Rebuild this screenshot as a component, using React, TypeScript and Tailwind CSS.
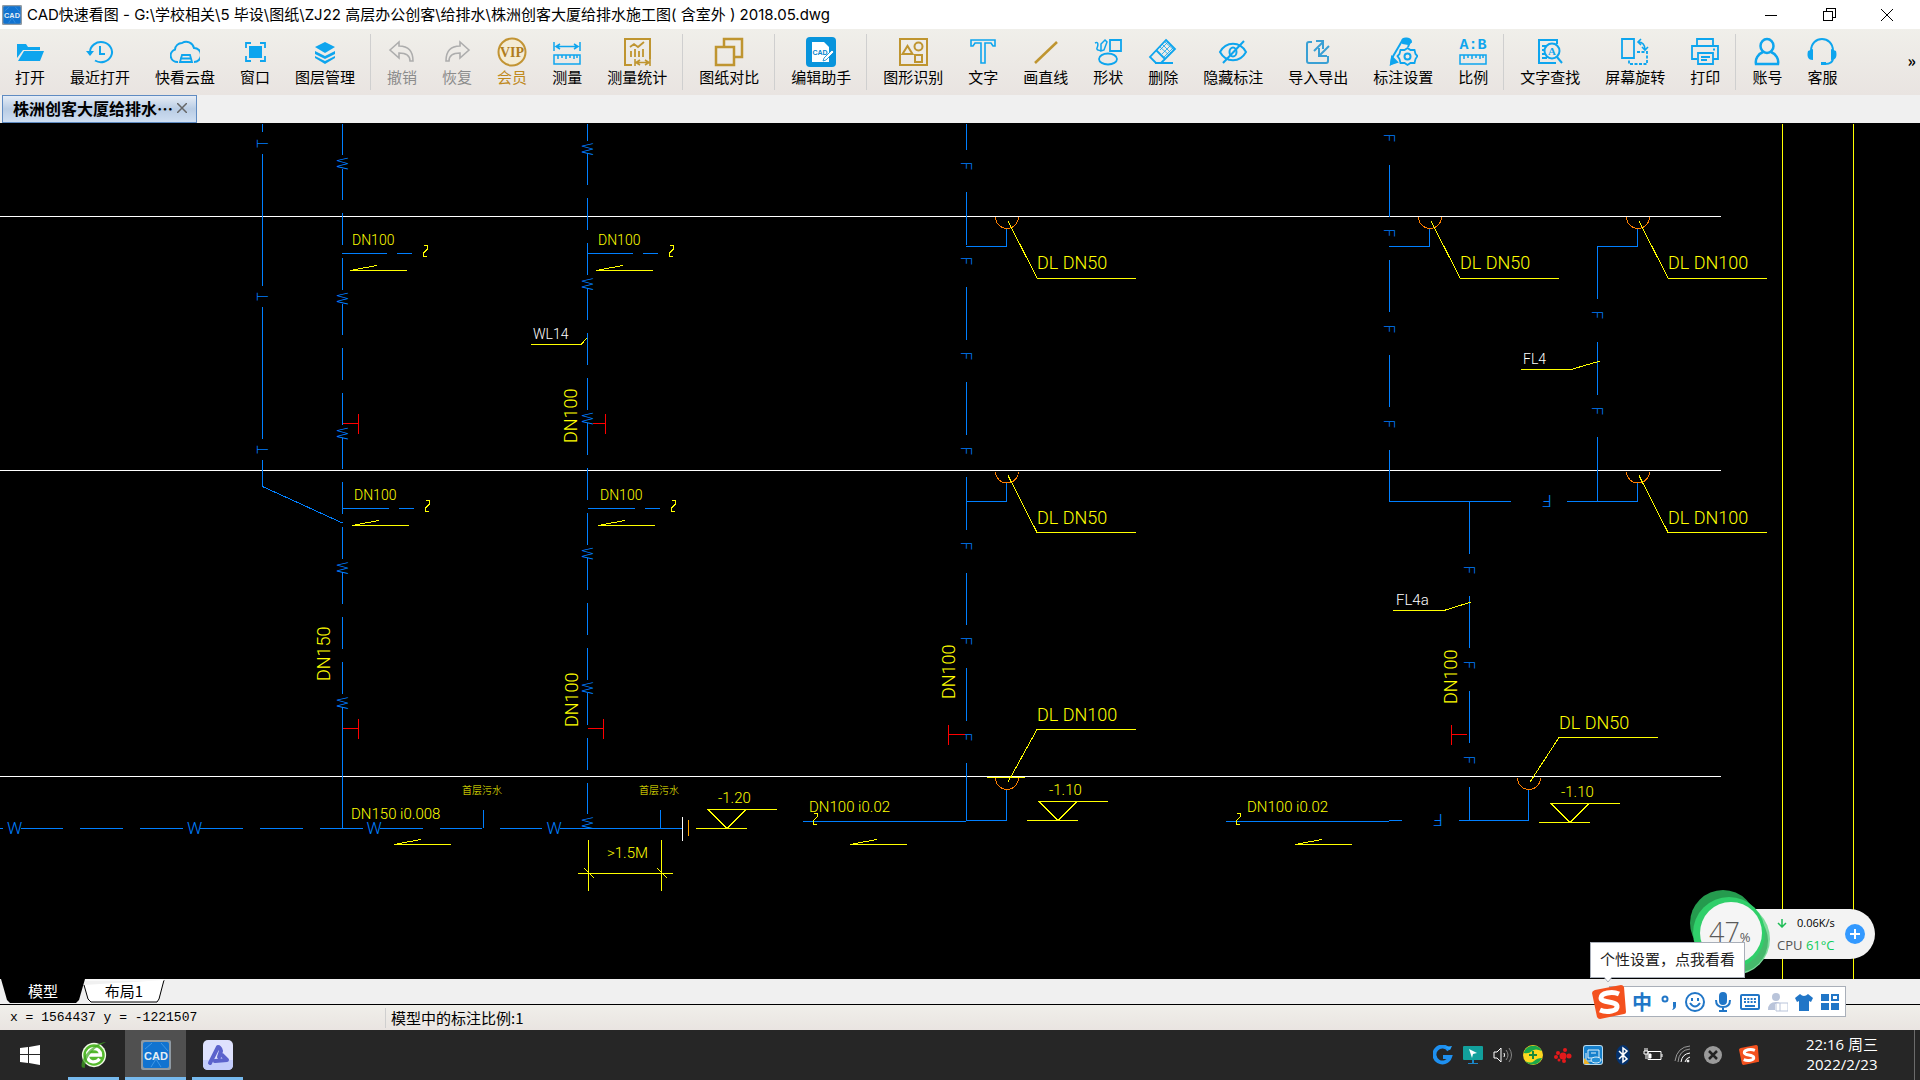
import type { ReactNode } from "react"

const SKY = "#0ea5ee"
const GOLD = "#bf9530"
const BLUE = "#007fff"
const YELLOW = "#ffff00"

/* ---------- toolbar icons ---------- */

function Icon({ children, stroke = SKY, sw = 2 }: { children: ReactNode; stroke?: string; sw?: number }) {
  return (
    <svg viewBox="0 0 30 30" className="h-[30px] w-[30px]" fill="none" stroke={stroke} strokeWidth={sw} aria-hidden="true">
      {children}
    </svg>
  )
}

const icons: Record<string, ReactNode> = {
  open: (
    <Icon stroke="none">
      <path fill={SKY} d="M2 7h9l2 3h12v3H8L2 21z" />
      <path fill={SKY} d="M9 14h20l-4 10H3z" />
    </Icon>
  ),
  recent: (
    <Icon>
      <path d="M5 15a11 10 0 1 1 5 8.500" />
      <path d="M15 9v8h5" />
      <path d="M1 14h8l-4 5z" fill={SKY} stroke="none" />
    </Icon>
  ),
  cloud: (
    <Icon>
      <path d="M8 25a7 6.500 0 0 1-3-12.500a7 7 0 0 1 7-6.500a8 8 0 0 1 12 5a7 7 0 0 1 0 14" />
      <path d="M10 25l2-7h8l2 7zM10 21.500h11" strokeWidth="1.800" />
    </Icon>
  ),
  window: (
    <Icon>
      <path d="M6 11V6h5M20 6h5v5M25 19v5h-5M11 24H6v-5" strokeWidth="1.800" />
      <path d="M10 10h11v10H10z" fill={SKY} />
    </Icon>
  ),
  layers: (
    <Icon stroke="none">
      <path fill={SKY} d="M15 5l10 5-10 6L5 10z" />
      <path fill={SKY} d="M5 14l10 5 10-5v3l-10 5-10-5zM5 19l10 5 10-5v2l-10 6-10-6z" />
    </Icon>
  ),
  undo: (
    <Icon stroke="#adadad">
      <path d="M3 13l9-8v4c9 0 14 5 14 15h-3c0-6-4-8-11-8v5z" strokeWidth="1.600" />
    </Icon>
  ),
  redo: (
    <Icon stroke="#adadad">
      <path d="M27 13l-9-8v4C9 9 4 14 4 24h3c0-6 4-8 11-8v5z" strokeWidth="1.600" />
    </Icon>
  ),
  vip: (
    <Icon stroke="#c29434">
      <circle cx="15" cy="15" r="13.500" fill="#f4ecd5" />
      <text x="15" y="20" textAnchor="middle" fill="#b07d1c" stroke="none" className="font-['Liberation_Serif'] text-[14px] font-bold">VIP</text>
    </Icon>
  ),
  measure: (
    <Icon sw={1.5}>
      <path d="M2 5v9M28 5v9M4 9.500h22M8 7L4 9.500 8 12M22 7l4 2.500-4 2.500" />
      <path d="M2 18h26v9H2zM6 18v4M10 18v3M14 18v4M18 18v3M22 18v4M25 18v3" />
    </Icon>
  ),
  stats: (
    <Icon stroke={GOLD}>
      <path d="M28 15V2H3v26h7M28 22V15" />
      <path d="M8 10l4-3 4 3 6-5M9 20v-6M13 20v-8M17 20v-6M21 20v-8" strokeWidth="1.800" />
      <path d="M13 22v7M28 21v8M14 25.500h13M18 23l-4 2.500 4 2.500M23 23l4 2.500-4 2.500" strokeWidth="1.600" />
    </Icon>
  ),
  compare: (
    <Icon stroke={GOLD} sw={2.5}>
      <path d="M10 10V2h18v18h-8" />
      <path d="M2 10h18v18H2z" />
    </Icon>
  ),
  helper: (
    <Icon stroke="none">
      <rect width="30" height="30" rx="4" fill="#0894dc" />
      <path d="M6 5h12l5 5v15H6z" fill="#fff" />
      <text x="14" y="18" textAnchor="middle" fill="#0785cc" className="font-['Liberation_Sans'] text-[7px] font-bold">CAD</text>
      <path d="M17 24l1-3 8-8 2 2-8 8z" fill="#fff" stroke="#0785cc" strokeWidth=".8" />
    </Icon>
  ),
  identify: (
    <Icon stroke={GOLD}>
      <path d="M2 2h27v26H2z" />
      <path d="M4.500 17l5-8 5 8z" />
      <circle cx="20.500" cy="9.500" r="4" />
      <path d="M17 18h7v7h-7z" />
    </Icon>
  ),
  text: (
    <Icon sw={1.6}>
      <path d="M3 3h24v6h-2l-2-3h-6v20h-4V6H7L5 9H3z" />
    </Icon>
  ),
  line: (
    <Icon stroke={GOLD} sw={2.5}>
      <path d="M4 26L26 5" />
    </Icon>
  ),
  shape: (
    <Icon sw={1.8}>
      <path d="M17 3h11v11H17z" />
      <ellipse cx="15" cy="22" rx="9" ry="5.500" />
      <path d="M8 14V7l4-4 2 2-3 8zM2 6c4-2 3 3 2 5s3 3 4 2" strokeWidth="1.500" />
    </Icon>
  ),
  erase: (
    <Icon sw={1.8}>
      <path d="M18 3l9 9-14 14H8l-6-6z M8 13l9 9M7 26h18" />
      <path d="M12 10l9 8M14 7l9 9M17 5l9 8M20 5l-8 8M23 8l-9 9M25 11l-9 9" strokeWidth=".8" />
    </Icon>
  ),
  hide: (
    <Icon>
      <path d="M2 15c6-11 20-11 26 0-6 11-20 11-26 0z" />
      <ellipse cx="15" cy="15" rx="3.500" ry="4.500" />
      <path d="M26 4L5 26" />
    </Icon>
  ),
  transfer: (
    <Icon stroke="#3aa0d4">
      <path d="M9 5H6q-2 0-2 2v17q0 2 2 2h17q2 0 2-2v-5" />
      <path d="M11 14l9-9M13 4h7v8M26 9l-9 9M16 11v8h8" />
    </Icon>
  ),
  marks: (
    <Icon>
      <path d="M14 4L4 21l-1 6 5-3M22 5l-2 5" />
      <path d="M14 4c1-4 9-3 9 1l-3 2-5-1zM3 27l1-7 5 5z" fill={SKY} />
      <path d="M19.500 11l3 2 4 0 1 4 2 2-2 3-1 4h-4l-3 2-3-2h-4l-1-4-2-3 2-2 1-4h4z" fill="#edeae6" strokeWidth="1.800" />
      <circle cx="19.500" cy="19.500" r="3" />
    </Icon>
  ),
  ratio: (
    <Icon sw={1.5}>
      <text x="15" y="12" textAnchor="middle" fill={SKY} stroke="none" className="font-['Liberation_Mono'] text-[15px] font-bold">A:B</text>
      <path d="M2 18h26v9H2zM6 18v4M10 18v3M14 18v4M18 18v3M22 18v4M25 18v3" />
    </Icon>
  ),
  find: (
    <Icon>
      <path d="M22 7V3H4v23h17M7 9h5M7 13h3M7 17h3M7 21h5" />
      <circle cx="17" cy="14" r="7.500" fill="#edeae6" />
      <path d="M22 20l5 6" />
      <text x="17" y="18" textAnchor="middle" fill={SKY} stroke="none" className="font-['Liberation_Serif'] text-[11px] font-bold">A</text>
    </Icon>
  ),
  rotate: (
    <Icon sw={1.8}>
      <path d="M2 2h12v19H2z" />
      <path d="M17 15h10v12H9v-5" strokeDasharray="3 1.500" />
      <path d="M18 5c5 0 7 3 7 8M21 2l-3 3 3 3M22 10l3 3 3-3" strokeWidth="1.600" />
    </Icon>
  ),
  print: (
    <Icon sw={1.8}>
      <path d="M7 9V2h16v7M7 22H2V9h26v13h-5M8 16h15v11H8zM11 20h9M11 23h6M23 12.500h2" />
    </Icon>
  ),
  user: (
    <Icon sw={2.5}>
      <ellipse cx="15" cy="9" rx="6.500" ry="7" />
      <path d="M11 15C6 17 3 22 4 27h22c1-5-2-10-7-12" />
    </Icon>
  ),
  service: (
    <Icon sw={2}>
      <path d="M4 14C4-2 26-2 26 14M26 21c0 4-3 6-8 6" />
      <path d="M1 14l5-2v11c-6 0-6-5-5-9zM29 14l-5-2v11c6 0 6-5 5-9zM14 25h5v3h-5z" fill={SKY} stroke="none" />
    </Icon>
  ),
}

type Tool = [icon: string, label: string, tone?: "muted" | "gold"]

const toolGroups: Tool[][] = [
  [["open", "打开"], ["recent", "最近打开"], ["cloud", "快看云盘"], ["window", "窗口"], ["layers", "图层管理"]],
  [["undo", "撤销", "muted"], ["redo", "恢复", "muted"], ["vip", "会员", "gold"], ["measure", "测量"], ["stats", "测量统计"]],
  [["compare", "图纸对比"]],
  [["helper", "编辑助手"]],
  [
    ["identify", "图形识别"], ["text", "文字"], ["line", "画直线"], ["shape", "形状"], ["erase", "删除"],
    ["hide", "隐藏标注"], ["transfer", "导入导出"], ["marks", "标注设置"], ["ratio", "比例"],
  ],
  [["find", "文字查找"], ["rotate", "屏幕旋转"], ["print", "打印"]],
  [["user", "账号"], ["service", "客服"]],
]

function ToolButton({ tool: [icon, label, tone] }: { tool: Tool }) {
  const color = tone === "muted" ? "text-[#8c8c8c]" : tone === "gold" ? "text-[#c08a1e]" : "text-black"
  return (
    <button type="button" className={`flex flex-col items-center gap-px px-3 pt-2 text-[15px] leading-[18px] whitespace-nowrap ${color}`}>
      {icons[icon]}
      {label}
    </button>
  )
}

function CadLogo({ className }: { className: string }) {
  return (
    <svg viewBox="0 0 30 30" className={className} aria-hidden="true">
      <rect width="30" height="30" rx="2" fill="#8f9aa3" />
      <rect x="2" y="2" width="26" height="26" rx="2" fill="#1173d0" />
      <path d="M4 9l7-6M20 3l7 8M10 27l5-8 5 8" stroke="#3f98e6" fill="none" />
      <text x="15" y="20" textAnchor="middle" fill="#e4eef5" className="font-['Liberation_Sans'] text-[11px] font-bold">CAD</text>
    </svg>
  )
}

function TitleBar() {
  return (
    <header className="flex h-[29px] shrink-0 items-center bg-white">
      <CadLogo className="ml-[2px] h-5 w-5" />
      <h1 className="ml-[5px] flex-1 truncate font-['Inter','Noto_Sans_CJK_SC',sans-serif] text-[15px] leading-5">
        CAD快速看图 - G:\学校相关\5 毕设\图纸\ZJ22 高层办公创客\给排水\株洲创客大厦给排水施工图( 含室外 ) 2018.05.dwg
      </h1>
      <div className="flex pr-1">
        <button type="button" aria-label="最小化" className="flex h-7 w-[58px] items-center justify-center">
          <svg viewBox="0 0 12 12" className="h-3 w-3" stroke="#000" shapeRendering="crispEdges"><path d="M0 6.500h12" /></svg>
        </button>
        <button type="button" aria-label="还原" className="flex h-7 w-[58px] items-center justify-center">
          <svg viewBox="0 0 13 13" className="h-[13px] w-[13px]" fill="none" stroke="#000" shapeRendering="crispEdges"><path d="M.5 3.500h9v9h-9zM3.500 3V.5h9v9H10" /></svg>
        </button>
        <button type="button" aria-label="关闭" className="flex h-7 w-[58px] items-center justify-center">
          <svg viewBox="0 0 12 12" className="h-3 w-3" stroke="#000"><path d="M0 0l12 12M12 0L0 12" /></svg>
        </button>
      </div>
    </header>
  )
}

function Toolbar() {
  return (
    <nav className="flex h-[66px] shrink-0 gap-px overflow-hidden bg-linear-to-b from-[#f0efea] to-[#e9e4e1] pl-[3px]">
      {toolGroups.map((group, i) => (
        <div key={i} className="flex gap-px">
          {i > 0 && <div className="mt-[5px] mr-[3px] ml-[2px] h-14 w-px bg-[#cfcfcf]" />}
          {group.map((tool) => (
            <ToolButton key={tool[0]} tool={tool} />
          ))}
        </div>
      ))}
      <button type="button" aria-label="更多" className="ml-auto self-center pr-1 pb-1 text-base leading-5 font-bold">»</button>
    </nav>
  )
}

/* ---------- drawing ---------- */

function VSegs({ x, segs }: { x: number; segs: number[][] }) {
  return <path d={segs.map(([a, b]) => `M${x} ${a}V${b}`).join("")} stroke={BLUE} />
}

function HSegs({ y, segs }: { y: number; segs: number[][] }) {
  return <path d={segs.map(([a, b]) => `M${a} ${y}H${b}`).join("")} stroke={BLUE} />
}

// pipe letter, turned to run along its pipe; x/y is the middle of its baseline
function Mark({ x, y, turn = 0, big, children }: { x: number; y: number; turn?: number; big?: boolean; children: string }) {
  return (
    <text transform={`translate(${x} ${y}) rotate(${turn})`} textAnchor="middle" fill={BLUE} stroke="none" className={big ? "text-[17px]" : "text-[14px]"}>
      {children}
    </text>
  )
}

const sizes = { sm: "text-[14px]", md: "text-[15px]", lg: "text-[18px]", cn: "text-[10px]" }

function Label({ x, y, size = "sm", color = YELLOW, turn = 0, children }: { x: number; y: number; size?: keyof typeof sizes; color?: string; turn?: number; children: string }) {
  return (
    <text y={-2} transform={`translate(${x} ${y}) rotate(${turn})`} fill={color} stroke="none" className={sizes[size]}>
      {children}
    </text>
  )
}

// flow arrow: base line with a half barb at its left end
function Flow({ x, y }: { x: number; y: number }) {
  return <path d={`M${x + 57} ${y}H${x}L${x + 27} ${y - 5}`} stroke={YELLOW} />
}

function Squiggle({ x, y }: { x: number; y: number }) {
  return <path d={`M${x - 1} ${y}h3v4l-4 4v3h4`} stroke={YELLOW} />
}

// floor drain bowl with its leader and label
function Drain({ x, y, up, children }: { x: number; y: number; up?: number; children: string }) {
  const ly = up ?? y + 61
  return (
    <g>
      <path d={`M${x - 11.5} ${y}a11.500 11.500 0 0 0 23 0`} stroke="#ff7f00" />
      <path d={`M${x + 1} ${y + 4}L${x + 30} ${ly}H${x + 129}`} stroke={YELLOW} />
      <Label x={x + 30} y={ly - 7} size="lg">{children}</Label>
    </g>
  )
}

function Level({ x, y, children }: { x: number; y: number; children: string }) {
  return (
    <g>
      <path d={`M${x + 69} ${y}H${x}l19 19 19-19M${x - 12} ${y + 19}h51`} stroke={YELLOW} />
      <Label x={x + 10} y={y - 5} size="md">{children}</Label>
    </g>
  )
}

function Tee({ x, y, to }: { x: number; y: number; to: number }) {
  return <path d={`M${x} ${y}H${to}M${to} ${y - 10}v20`} stroke="#f00" />
}

function Branch({ x, y, dx = 0 }: { x: number; y: number; dx?: number }) {
  return (
    <g>
      <Label x={x + 10 + dx} y={y - 7}>DN100</Label>
      <HSegs y={y} segs={[[x, x + 45 + dx], [x + 55 + dx, x + 70 + dx]]} />
      <Squiggle x={x + 83 + dx} y={y - 8} />
      <Flow x={x + 8 + dx} y={y + 17} />
    </g>
  )
}

function Drawing() {
  return (
    <svg
      viewBox="0 123 1920 856"
      preserveAspectRatio="xMinYMin slice"
      className="block h-full w-full font-['Roboto','Noto_Sans_CJK_SC',sans-serif] font-light"
      fill="none"
      strokeWidth="1"
      shapeRendering="crispEdges"
      role="img"
      aria-label="给排水系统图"
    >
      <path d="M0 216.500H1721M0 470.500H1721M0 776.500H1721" stroke="#fff" />
      <path d="M1782.500 124V979M1853.500 124V979" stroke={YELLOW} />

      {/* vent and waste risers */}
      <VSegs x={262.5} segs={[[124, 132], [154, 286], [307, 439], [460, 487]]} />
      <path d="M262.500 486.500L342.500 523" stroke={BLUE} />
      {[143.5, 296.5, 449.5].map((y) => <Mark key={y} x={268} y={y} turn={-90}>T</Mark>)}
      <VSegs
        x={342.5}
        segs={[[124, 155], [169, 200], [213, 245], [258, 290], [304, 335], [348, 380], [393, 425], [438, 469], [482, 514], [527, 559], [572, 604], [617, 649], [662, 694], [707, 828]]}
      />
      {[163.5, 298.5, 433.5, 568, 703].map((y) => <Mark key={y} x={337} y={y} turn={90}>W</Mark>)}
      <VSegs
        x={587.5}
        segs={[[124, 141], [153, 185], [198, 230], [243, 275], [288, 320], [333, 365], [378, 410], [423, 455], [468, 500], [513, 545], [558, 590], [603, 635], [648, 680], [693, 725], [738, 770], [783, 814]]}
      />
      {[149, 284, 418.5, 553.5, 688, 823].map((y) => <Mark key={y} x={582} y={y} turn={90}>W</Mark>)}

      <Branch x={342} y={253.5} />
      <Branch x={588} y={253.5} />
      <Branch x={342} y={508.5} dx={2} />
      <Branch x={588} y={508.5} dx={2} />

      <Label x={533} y={341} color="#fff">WL14</Label>
      <path d="M531 344.500H581L587 338" stroke={YELLOW} />
      <Label x={579} y={443} size="lg" turn={-90}>DN100</Label>
      <Label x={332} y={681} size="lg" turn={-90}>DN150</Label>
      <Label x={580} y={727} size="lg" turn={-90}>DN100</Label>
      <Tee x={343} y={423.5} to={358.5} />
      <Tee x={593} y={423.5} to={605.5} />
      <Tee x={343} y={728.5} to={358.5} />
      <Tee x={588} y={728.5} to={603.5} />

      {/* outlet main */}
      <HSegs y={828.5} segs={[[0, 3], [21, 63], [80, 123], [140, 183], [200, 243], [260, 303], [320, 363], [380, 423], [440, 482], [500, 542], [560, 682]]} />
      {[14.5, 194.5, 374, 554].map((x) => <Mark key={x} x={x} y={834} big>W</Mark>)}
      <VSegs x={483.5} segs={[[810, 828]]} />
      <VSegs x={660.5} segs={[[810, 828]]} />
      <Label x={462} y={796} size="cn">首层污水</Label>
      <Label x={639} y={796} size="cn">首层污水</Label>
      <Label x={351} y={821} size="md">DN150 i0.008</Label>
      <Flow x={394} y={844.5} />
      <path d="M682.500 817V841" stroke="#fff" />
      <path d="M688.500 820V836" stroke="#ffa500" />
      <Level x={708} y={809.5}>-1.20</Level>
      <path d="M588.500 840V891M661.500 840V891M578 873.500H673M584 868l10 10M657 868l10 10" stroke={YELLOW} />
      <Label x={607} y={860} size="md">{">1.5M"}</Label>

      {/* middle drain riser */}
      <VSegs x={966.5} segs={[[124, 150], [192, 245], [287, 340], [382, 435], [477, 530], [573, 625], [668, 721], [763, 820]]} />
      {[166, 261, 356, 451, 546, 641, 737].map((y) => <Mark key={y} x={961} y={y} turn={90}>F</Mark>)}
      <path d="M966 246.500H1006.500V228M966 501.500H1006.500V483M966 820.500H1006.500V790M803 821.500H966" stroke={BLUE} />
      <Drain x={1007} y={217}>DL DN50</Drain>
      <Drain x={1007} y={471.5}>DL DN50</Drain>
      <Drain x={1007} y={778} up={729.5}>DL DN100</Drain>
      <path d="M987 777.500H1025" stroke={YELLOW} />
      <Label x={957} y={699} size="lg" turn={-90}>DN100</Label>
      <Tee x={965} y={734.5} to={948.5} />
      <Squiggle x={815} y={813} />
      <Label x={809} y={814} size="md">DN100 i0.02</Label>
      <Flow x={850} y={844.5} />
      <Level x={1039} y={801.5}>-1.10</Level>

      {/* right drain risers */}
      <VSegs x={1389.5} segs={[[165, 217], [260, 312], [355, 407], [450, 501]]} />
      {[138, 233, 329, 424].map((y) => <Mark key={y} x={1384} y={y} turn={90}>F</Mark>)}
      <VSegs x={1597.5} segs={[[246, 299], [342, 395], [437, 501]]} />
      {[315, 411].map((y) => <Mark key={y} x={1592} y={y} turn={90}>F</Mark>)}
      <VSegs x={1469.5} segs={[[501, 554], [596, 648], [691, 743], [787, 820]]} />
      {[570, 665, 760].map((y) => <Mark key={y} x={1464} y={y} turn={90}>F</Mark>)}
      <path d="M1389 246.500H1429.500V228M1597 246.500H1637.500V228M1389 501.500H1511M1567 501.500H1637.500V483" stroke={BLUE} />
      <path d="M1459 820.500H1528.500V790M1226 821.500H1389M1389 820.500H1402" stroke={BLUE} />
      <Mark x={1547} y={495} turn={180} big>F</Mark>
      <Mark x={1438} y={814} turn={180} big>F</Mark>
      <Drain x={1430} y={217}>DL DN50</Drain>
      <Drain x={1638} y={217}>DL DN100</Drain>
      <Drain x={1638} y={471.5}>DL DN100</Drain>
      <Drain x={1529} y={778} up={737.5}>DL DN50</Drain>
      <Label x={1523} y={366} color="#fff">FL4</Label>
      <path d="M1521 369.500H1571L1600 361" stroke={YELLOW} />
      <Label x={1396} y={607} color="#fff" size="md">FL4a</Label>
      <path d="M1393 610.500H1444L1471 602" stroke={YELLOW} />
      <Label x={1459} y={704} size="lg" turn={-90}>DN100</Label>
      <Tee x={1467} y={734.5} to={1451.5} />
      <Squiggle x={1238} y={813} />
      <Label x={1247} y={814} size="md">DN100 i0.02</Label>
      <Flow x={1295} y={844.5} />
      <Level x={1551} y={803.5}>-1.10</Level>
    </svg>
  )
}

/* ---------- bottom bars ---------- */

function LayoutTabs() {
  return (
    <div className="relative flex h-[26px] shrink-0 border-b border-black bg-[#f0f0f0]">
      <button type="button" className="relative h-6 w-[86px] text-[15px] leading-6 text-white">
        <svg viewBox="0 0 86 24" className="absolute inset-0 h-full w-full" aria-hidden="true"><path d="M1 0h84l-6 21-3 3H10l-3-3z" /></svg>
        <span className="relative">模型</span>
      </button>
      <button type="button" className="relative -ml-[3px] h-6 w-[82px] text-[15px] leading-6">
        <svg viewBox="0 0 82 24" className="absolute inset-0 h-full w-full" aria-hidden="true">
          <path d="M1 6l4 14 3 3h66l2-3L81 1" fill="#fff" stroke="#000" />
          <path d="M2 1h79" stroke="#fff" />
        </svg>
        <span className="relative">布局1</span>
      </button>
    </div>
  )
}

function StatusBar() {
  return (
    <div className="flex h-[25px] shrink-0 items-center bg-linear-to-b from-[#f0efea] to-[#e9e4e1] leading-5">
      <span className="w-[385px] pl-[10px] font-['Liberation_Mono',monospace] text-[13px] whitespace-pre">x = 1564437 y = -1221507</span>
      <span className="border-l border-[#cfcfcf] pl-[5px] text-[15px]">模型中的标注比例:1</span>
    </div>
  )
}

function Sogou({ className }: { className: string }) {
  return (
    <svg viewBox="0 0 34 34" className={className} aria-hidden="true">
      <path d="M3 5L29 0q2 0 3 2l2 25q0 2-2 2L8 34q-2 0-3-2L0 8q0-2 3-3z" fill="#f4511e" />
      <path d="M27 9C20 6 9 8 9 13s15 3 16 8-10 7-17 4" fill="none" stroke="#fff" strokeWidth="5" />
    </svg>
  )
}

function Tray() {
  return (
    <div className="ml-auto flex items-center gap-[10px]">
      <svg viewBox="0 0 20 20" className="h-5 w-5" fill="none"><path d="M16 5A8 8 0 1 0 17 12H10" stroke="#1e90f0" strokeWidth="4" /><path d="M12 2l7-1-2 4z" fill="#29a4ff" /></svg>
      <svg viewBox="0 0 20 20" className="h-5 w-5"><rect y="1" width="20" height="14" rx="1" fill="#12a09c" /><path d="M9 15h2v3h4v1H5v-1h4z" fill="#1a86c8" /><path d="M6 4l8 4-4 1-1 4z" fill="#fff" /></svg>
      <svg viewBox="0 0 20 20" className="h-5 w-5" fill="none" stroke="#fff"><path d="M1 7h3l4-4v14l-4-4H1zM11 8q1 2 0 4" /><path d="M13 5q4 5 0 10M16 3q5 7 0 14" stroke="#888" /></svg>
      <svg viewBox="0 0 20 20" className="h-5 w-5"><circle cx="10" cy="10" r="10" fill="#fdd820" /><path d="M1 7A10 10 0 0 1 19 6Q12 3 9 6T1 8zM19 13a10 10 0 0 1-17 3q6 3 9 0t8-3z" fill="#1aa64b" /><path d="M10 6v8M6 10h8" stroke="#1a8a3c" strokeWidth="2" /></svg>
      <svg viewBox="0 0 20 20" className="h-5 w-5" fill="#e3191b"><circle cx="10" cy="11" r="3.500" /><circle cx="5" cy="8" r="2" /><circle cx="12" cy="5" r="2" /><circle cx="16" cy="11" r="2.500" /><circle cx="3" cy="12" r="2" /><circle cx="11" cy="16" r="2" /><circle cx="6" cy="15" r="1.500" /></svg>
      <svg viewBox="0 0 20 20" className="h-5 w-5"><rect width="20" height="20" rx="3" fill="#b6d8ec" /><rect x="1" y="1" width="18" height="18" rx="2" fill="#1680cc" /><path d="M5 5h11v8H5zM3 8v8h9M8 8h5" fill="none" stroke="#dff1fb" /><ellipse cx="13" cy="15" rx="5" ry="3" fill="#2690d6" stroke="#dff1fb" /><path d="M1 19v-6l6 6z" fill="#f0b429" /></svg>
      <svg viewBox="0 0 20 20" className="h-5 w-5"><ellipse cx="10" cy="10" rx="7" ry="10" fill="#04326e" /><path d="M6 6l8 8-4 3V3l4 3-8 8" fill="none" stroke="#fff" strokeWidth="1.500" /></svg>
      <svg viewBox="0 0 20 20" className="h-5 w-5" fill="none" stroke="#fff"><path d="M5 6.500h13v8H5zM19 9v3M2 3v3M4 3v3M1 6h4v3H1zM3 9v5" /><path d="M6 9h2v4H6z" fill="#fff" /></svg>
      <svg viewBox="0 0 20 20" className="h-5 w-5" fill="none" stroke="#fff"><path d="M12 17q1-4 5-5M8 17q1-8 9-9" /><path d="M5 17Q6 5 17 4M2 16Q4 2 17 1" stroke="#999" /><circle cx="15" cy="16" r="1" fill="#fff" /></svg>
      <svg viewBox="0 0 20 20" className="h-5 w-5"><circle cx="10" cy="10" r="9" fill="#9a9a9a" /><path d="M6 6l8 8M14 6l-8 8" stroke="#222" strokeWidth="2.500" /></svg>
      <Sogou className="ml-[6px] h-5 w-5" />
    </div>
  )
}

function Taskbar() {
  return (
    <footer className="flex h-[50px] shrink-0 bg-[#262626]">
      <button type="button" aria-label="开始" className="flex w-[60px] items-center justify-center">
        <svg viewBox="0 0 20 20" className="h-5 w-5" fill="#fff"><path d="M0 3l8-1v7H0zM9 2l11-2v9H9zM0 10h8v8l-8-1zM9 10h11v10L9 18z" /></svg>
      </button>
      <button type="button" aria-label="浏览器" className="ml-2 flex w-[51px] items-center justify-center border-b-3 border-[#76b9ed] pt-[3px]">
        <svg viewBox="0 0 30 30" className="h-7 w-7">
          <circle cx="15" cy="15" r="13" fill="#f3fbe9" />
          <circle cx="15" cy="15" r="11.500" fill="#55b92d" />
          <path d="M8 15h14c0-9-14-9-14 0s9 9 13 4" fill="none" stroke="#fff" strokeWidth="3.500" />
          <path d="M2 28C0 18 14 2 28 1 16 6 6 16 5 29z" fill="#3fa61f" opacity=".7" />
        </svg>
      </button>
      <button type="button" aria-label="CAD快速看图" className="ml-[6px] flex w-[61px] items-center justify-center border-b-3 border-[#76b9ed] bg-[#505050] pt-[3px]">
        <CadLogo className="h-[30px] w-[30px]" />
      </button>
      <button type="button" aria-label="应用" className="ml-[6px] flex w-[51px] items-center justify-center border-b-3 border-[#76b9ed] pt-[3px]">
        <svg viewBox="0 0 30 30" className="h-[30px] w-[30px]">
          <rect width="30" height="30" rx="5" fill="#dfe2fd" />
          <path d="M0 20h30v5q0 5-5 5H5q-5 0-5-5z" fill="#c3ccfb" />
          <path d="M7 23L15 7q2 0 3 4l-2 6M12 21l12-1-5-5" fill="none" stroke="#5b62cc" strokeWidth="4" strokeLinejoin="round" strokeLinecap="round" />
        </svg>
      </button>
      <Tray />
      <div className="mr-8 ml-[43px] flex w-20 flex-col items-center justify-center pb-[3px] font-['Open_Sans','Noto_Sans_CJK_SC',sans-serif] text-[15px] leading-5 text-white">
        <span className="whitespace-nowrap">22:16 周三</span>
        <span>2022/2/23</span>
      </div>
      <div className="w-[6px] border-l border-[#6b6b6b]" />
    </footer>
  )
}

/* ---------- floating widgets ---------- */

function Monitor() {
  return (
    <div className="absolute right-[45px] bottom-[121px] flex h-[50px] w-[180px] items-center">
      <svg viewBox="0 0 90 90" className="absolute top-1/2 -left-[9px] h-[90px] w-[90px] -translate-y-1/2" aria-hidden="true">
        <rect x="45" y="20" width="45" height="50" fill="#f3f3f3" />
        <circle cx="37" cy="34" r="33" fill="#259b4e" />
        <circle cx="48" cy="50" r="36" fill="#7fdc9d" />
        <circle cx="50" cy="52" r="32" fill="#46b96c" />
        <circle cx="43" cy="44" r="36" fill="#30cf6a" />
        <circle cx="45" cy="44" r="31" fill="#f5f5f5" />
      </svg>
      <div className="ml-auto flex h-full w-[108px] items-center rounded-r-full bg-[#f3f3f3] pr-[10px] pl-[10px]">
        <div className="flex-1 font-['Open_Sans',sans-serif]">
          <div className="flex items-center text-[11px] leading-[22px]">
            <svg viewBox="0 0 10 10" className="h-[10px] w-[10px]" fill="none" stroke="#1dbd55" strokeWidth="1.500"><path d="M5 1v8M1 5l4 4 4-4" /></svg>
            <span className="ml-[10px]">0.06K/s</span>
          </div>
          <div className="text-[13px] leading-[22px] whitespace-nowrap text-[#555]">
            CPU <span className="text-[#10cc5c]">61°C</span>
          </div>
        </div>
        <button type="button" aria-label="加速" className="flex h-5 w-5 shrink-0 items-center justify-center rounded-full bg-[#3399ff]">
          <svg viewBox="0 0 10 10" className="h-[10px] w-[10px]" stroke="#fff" strokeWidth="2"><path d="M5 0v10M0 5h10" /></svg>
        </button>
      </div>
      <div className="absolute left-[14px] flex items-baseline font-['Open_Sans',sans-serif] leading-9 text-[#5a5a5a]">
        <span className="text-[27px] font-light">47</span>
        <span className="text-[13px]">%</span>
      </div>
    </div>
  )
}

function ImeBar() {
  const c = "#2176c7"
  return (
    <div className="absolute right-[74px] bottom-[63px] flex h-[31px] w-[237px] items-center border border-[#a9afb9] bg-white pr-[6px] pl-[22px] text-[#2176c7]">
      <Sogou className="absolute -left-[18px] h-[34px] w-[34px]" />
      <div className="flex flex-1 items-center justify-between">
        <button type="button" className="text-[20px] leading-6 font-bold">中</button>
        <svg viewBox="0 0 18 18" className="h-[18px] w-[18px]" fill="none" stroke={c} strokeWidth="2"><circle cx="5" cy="6" r="2.500" /><path d="M13 9h3v4q0 3-4 4 2-2 1-4z" fill={c} stroke="none" /></svg>
        <svg viewBox="0 0 20 20" className="h-5 w-5" fill="none" stroke={c} strokeWidth="2"><circle cx="10" cy="10" r="9" /><path d="M5 11q5 7 10 0M7 6v3M13 6v3" /></svg>
        <svg viewBox="0 0 20 20" className="h-5 w-5" fill="none" stroke={c} strokeWidth="2"><rect x="7" y="1" width="6" height="11" rx="3" fill={c} /><path d="M3 8q0 7 7 7t7-7M10 15v4M6 19h8" /></svg>
        <svg viewBox="0 0 20 16" className="h-4 w-5" fill="none" stroke={c} strokeWidth="2"><rect x="1" y="1" width="18" height="14" rx="1" /><path d="M4 5h12M4 8h12" strokeDasharray="2 1.300" /><path d="M5 12h10" /></svg>
        <svg viewBox="0 0 20 20" className="h-5 w-5" fill="#b9c4da"><circle cx="8" cy="5" r="4" /><path d="M0 18q0-8 8-8 4 0 5 2H7v6z" /><path d="M8 11h12v8H8zM12 11v8" fill="#fff" stroke="#b9c4da" /></svg>
        <svg viewBox="0 0 18 18" className="h-[18px] w-[18px]" fill={c}><path d="M5 1q4 4 8 0l5 4-2 4-2-1v10H4V8L2 9 0 5z" /></svg>
        <svg viewBox="0 0 18 18" className="h-[18px] w-[18px]" fill={c}><path d="M0 1h8v7H0zM0 10h8v7H0zM10 10h8v7h-8z" /><rect x="11" y="2" width="6" height="5" fill="none" stroke={c} strokeWidth="2" /></svg>
      </div>
    </div>
  )
}

function ImeTip() {
  return (
    <div className="absolute right-[175px] bottom-[102px] flex h-9 w-[155px] items-center justify-center border border-[#a9afb9] bg-white pb-[3px] text-[15px] leading-5 whitespace-nowrap text-[#222]">
      个性设置，点我看看
      <svg viewBox="0 0 10 6" className="absolute top-full left-3 h-[6px] w-[10px]"><path d="M0-1l5 6 5-6" fill="#fff" stroke="#a9afb9" /></svg>
    </div>
  )
}

export default function App() {
  return (
    <div className="relative flex h-screen flex-col overflow-hidden bg-[#f0f0f0] font-['Noto_Sans_CJK_SC',sans-serif] text-black">
      <TitleBar />
      <Toolbar />
      <div className="flex h-7 shrink-0 pl-[2px]">
        <div className="flex w-[195px] items-center gap-1 border border-[#5f8bc2] bg-linear-to-b from-[#e6edf6] via-[#b9cce4] to-[#cfdff2] pb-[2px] pl-[10px] text-base leading-6 font-bold">
          <span className="whitespace-nowrap">株洲创客大厦给排水⋯</span>
          <button type="button" aria-label="关闭标签">
            <svg viewBox="0 0 10 10" className="h-[10px] w-[10px]" stroke="#666" strokeWidth="1.500"><path d="M0 0l10 10M10 0L0 10" /></svg>
          </button>
        </div>
      </div>
      <main className="min-h-0 flex-1 bg-black">
        <Drawing />
      </main>
      <LayoutTabs />
      <StatusBar />
      <Taskbar />
      <Monitor />
      <ImeTip />
      <ImeBar />
    </div>
  )
}
